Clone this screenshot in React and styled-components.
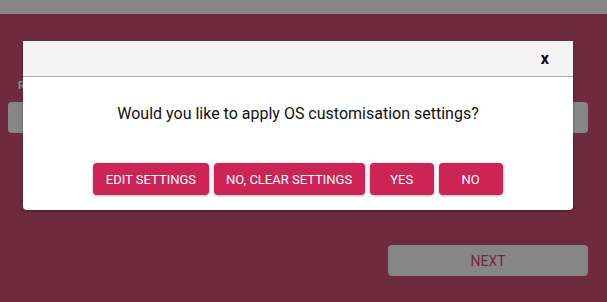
import React from "react";
import styled, { createGlobalStyle } from "styled-components";

const Global = createGlobalStyle`
  html, body { margin: 0; padding: 0; }
  body { font-family: Roboto, "Liberation Sans", sans-serif; background: #6e2b40; }
  * { box-sizing: border-box; }
`;

const Page = styled.div`
  position: relative;
  width: 607px;
  height: 302px;
  background: #6e2b40;
  overflow: hidden;
  display: flex;
  flex-direction: column;
`;

const TopBar = styled.div`
  height: 14px;
  background: #868686;
  flex: none;
`;

const Content = styled.div`
  display: flex;
  flex-direction: column;
  padding: 66px 19px 0 8px;
`;

const FieldLabel = styled.div`
  font-size: 11px;
  font-weight: 700;
  color: #8d8a8c;
  padding-left: 10px;
  line-height: 12px;
  height: 12px;
`;

const Field = styled.div`
  margin-top: 10px;
  height: 31px;
  border-radius: 4px;
  background: #868686;
`;

const NextButton = styled.div`
  align-self: flex-end;
  margin-top: 112px;
  width: 200px;
  height: 31px;
  border-radius: 4px;
  background: #868686;
  color: #6e2b40;
  font-size: 14px;
  display: flex;
  align-items: center;
  justify-content: center;
`;

const Dialog = styled.div`
  position: absolute;
  left: 23px;
  top: 41px;
  width: 550px;
  height: 169px;
  background: #ffffff;
  border-radius: 0 0 4px 4px;
  box-shadow: 0 1px 3px rgba(0, 0, 0, 0.35);
  display: flex;
  flex-direction: column;
`;

const Header = styled.div`
  height: 36px;
  background: #f4f4f4;
  border-bottom: 1px solid #a9a9a9;
  display: flex;
  align-items: center;
  justify-content: flex-end;
  padding-right: 24px;
`;

const Close = styled.span`
  font-size: 16px;
  font-weight: 700;
  color: #000;
  line-height: 1;
  margin-top: 0px;
`;

const Body = styled.div`
  flex: 1;
  display: flex;
  flex-direction: column;
  align-items: center;
`;

const Question = styled.div`
  margin-top: 27px;
  font-size: 16px;
  line-height: 19px;
  color: #111;
`;

const Buttons = styled.div`
  margin-top: 40px;
  display: flex;
  gap: 5px;
`;

const Button = styled.button`
  height: 32px;
  min-width: 64px;
  padding: 0 ${(p) => p.$pad}px;
  border: none;
  border-radius: 4px;
  background: #cd2355;
  color: #fff;
  font-family: Roboto, "Liberation Sans", sans-serif;
  font-size: 13px;
  text-transform: uppercase;
  box-shadow: 0 1px 3px rgba(0, 0, 0, 0.3);
  cursor: pointer;
`;

export default function App() {
  return (
    <>
      <Global />
      <Page>
        <TopBar />
        <Content>
          <FieldLabel>Raspberry Pi Device</FieldLabel>
          <Field />
          <NextButton>NEXT</NextButton>
        </Content>
        <Dialog>
          <Header>
            <Close>x</Close>
          </Header>
          <Body>
            <Question>Would you like to apply OS customisation settings?</Question>
            <Buttons>
              <Button $pad={12.5}>Edit settings</Button>
              <Button $pad={12.5}>No, clear settings</Button>
              <Button $pad={12.5}>Yes</Button>
              <Button $pad={12.5}>No</Button>
            </Buttons>
          </Body>
        </Dialog>
      </Page>
    </>
  );
}
